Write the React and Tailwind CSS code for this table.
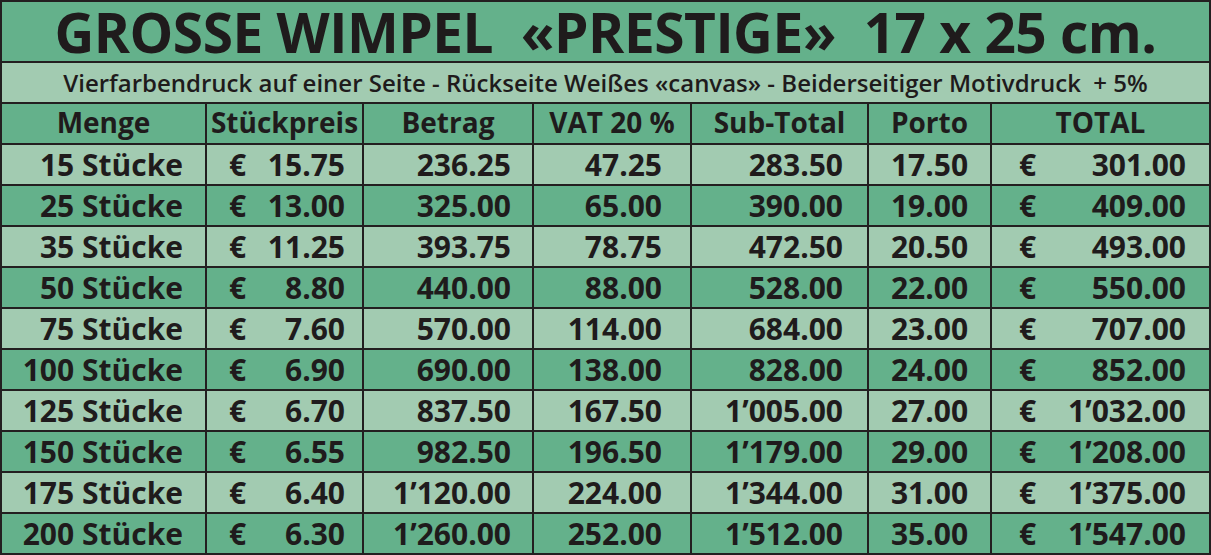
const rows = [
  ["15", "15.75", "236.25", "47.25", "283.50", "17.50", "301.00"],
  ["25", "13.00", "325.00", "65.00", "390.00", "19.00", "409.00"],
  ["35", "11.25", "393.75", "78.75", "472.50", "20.50", "493.00"],
  ["50", "8.80", "440.00", "88.00", "528.00", "22.00", "550.00"],
  ["75", "7.60", "570.00", "114.00", "684.00", "23.00", "707.00"],
  ["100", "6.90", "690.00", "138.00", "828.00", "24.00", "852.00"],
  ["125", "6.70", "837.50", "167.50", "1’005.00", "27.00", "1’032.00"],
  ["150", "6.55", "982.50", "196.50", "1’179.00", "29.00", "1’208.00"],
  ["175", "6.40", "1’120.00", "224.00", "1’344.00", "31.00", "1’375.00"],
  ["200", "6.30", "1’260.00", "252.00", "1’512.00", "35.00", "1’547.00"],
];

const headers = ["Menge", "Stückpreis", "Betrag", "VAT 20 %", "Sub-Total", "Porto", "TOTAL"];

export default function App() {
  return (
    <div
      className="w-[1211px] h-[555px] bg-[#231f20] p-[2px] grid grid-cols-[203px_155px_168px_156px_175px_121px_217px] grid-rows-[59px_repeat(12,39px)] gap-[2px] text-[#1f1b1c] font-bold"
      style={{ fontFamily: '"Open Sans", "Noto Sans", sans-serif' }}
    >
      <div className="col-span-7 bg-[#64b18b] flex items-center justify-center text-[55px] leading-none tracking-[-0.5px] whitespace-pre">
        {"GROSSE WIMPEL  «PRESTIGE»  17 x 25 cm."}
      </div>
      <div className="col-span-7 bg-[#a2cbb1] flex items-center justify-center text-[24px] leading-[39px] font-semibold whitespace-pre">
        {"Vierfarbendruck auf einer Seite - Rückseite Weißes «canvas» - Beiderseitiger Motivdruck  + 5%"}
      </div>
      {headers.map((h) => (
        <div key={h} className="bg-[#64b18b] flex items-center justify-center text-[28px] leading-[36px] pb-[3px] whitespace-nowrap">
          {h}
        </div>
      ))}
      {rows.map((r, i) => {
        const bg = i % 2 === 0 ? "bg-[#a2cbb1]" : "bg-[#64b18b]";
        const cell = `${bg} text-[30px] leading-[39px] whitespace-nowrap`;
        return [
          <div key={`${i}a`} className={`${cell} text-right pr-[22px]`}>{r[0]} Stücke</div>,
          <div key={`${i}b`} className={`${cell} flex justify-between pl-[22px] pr-[17px]`}>
            <span>€</span>
            <span>{r[1]}</span>
          </div>,
          <div key={`${i}c`} className={`${cell} text-right pr-[21px]`}>{r[2]}</div>,
          <div key={`${i}d`} className={`${cell} text-right pr-[28px]`}>{r[3]}</div>,
          <div key={`${i}e`} className={`${cell} text-right pr-[24px]`}>{r[4]}</div>,
          <div key={`${i}f`} className={`${cell} text-center`}>{r[5]}</div>,
          <div key={`${i}g`} className={`${cell} flex justify-between pl-[27px] pr-[23px]`}>
            <span>€</span>
            <span>{r[6]}</span>
          </div>,
        ];
      })}
    </div>
  );
}
